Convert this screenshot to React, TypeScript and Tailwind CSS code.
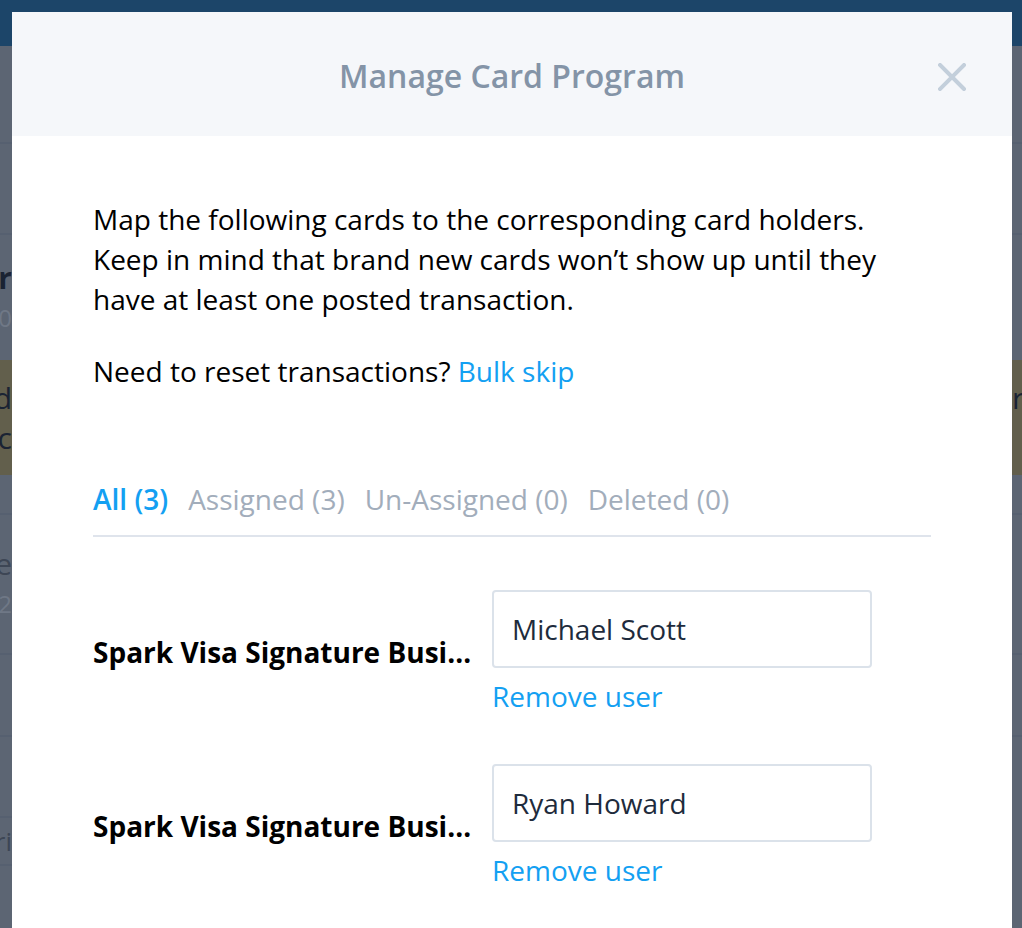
import React from 'react';

const cards = [
  { name: 'Spark Visa Signature Business Card', holder: 'Michael Scott' },
  { name: 'Spark Visa Signature Business Card', holder: 'Ryan Howard' },
];

const tabs = [
  { label: 'All (3)', active: true },
  { label: 'Assigned (3)', active: false },
  { label: 'Un-Assigned (0)', active: false },
  { label: 'Deleted (0)', active: false },
];

function CloseIcon() {
  return (
    <svg width="28" height="28" viewBox="0 0 28 28" fill="none">
      <path d="M2 2L26 26M26 2L2 26" stroke="#c3cfdb" strokeWidth="4" strokeLinecap="square" />
    </svg>
  );
}

export default function App() {
  return (
    <div className="relative w-full h-[928px] overflow-hidden bg-[#5c6573] font-['Open_Sans',sans-serif]">
      {/* Dimmed page behind the modal */}
      <div className="h-[46px] bg-[#1c4569]" />
      <div className="h-[98px] border-b-2 border-[#566070]" />
      <div className="h-[91px] border-b-2 border-[#566070]" />
      <div className="h-[125px] flex flex-col justify-center gap-[10px] text-[30px] leading-[30px]">
        <div className="w-3 flex justify-end overflow-hidden font-bold text-[#1a2333] whitespace-nowrap">Four</div>
        <div className="w-3 flex justify-end overflow-hidden text-[#6f7886] text-[24px] whitespace-nowrap">2020</div>
      </div>
      <div className="h-[115px] bg-[#625f4c] flex flex-col justify-center gap-[8px] text-[30px] leading-[32px] text-[#1a2333]">
        <div className="flex justify-between whitespace-nowrap">
          <div className="w-3 flex justify-end overflow-hidden">Need</div>
          <div className="w-[10px] overflow-hidden">rc</div>
        </div>
        <div className="w-3 flex justify-end overflow-hidden whitespace-nowrap">r c</div>
      </div>
      <div className="h-[40px] border-b-2 border-[#566070]" />
      <div className="h-[140px] border-b-2 border-[#566070] flex flex-col justify-center gap-[10px] text-[30px] leading-[30px]">
        <div className="w-3 flex justify-end overflow-hidden text-[#3d4655] whitespace-nowrap">Due</div>
        <div className="w-3 flex justify-end overflow-hidden text-[#6f7886] text-[24px] whitespace-nowrap">12</div>
      </div>
      <div className="h-[82px] border-b-2 border-[#566070]" />
      <div className="h-[81px] border-b-2 border-[#566070] w-3" />
      <div className="h-[48px] border-b-2 border-[#566070] w-3 flex items-center justify-end overflow-hidden text-[26px] text-[#3d4655] whitespace-nowrap">
        Pri
      </div>

      {/* Modal */}
      <div className="absolute top-3 left-3 w-[1000px] h-[940px] bg-white">
        <div className="relative h-[124px] bg-[#f5f7fa] flex items-center justify-center pt-[3px]">
          <h1 className="text-[32px] font-semibold text-[#8494a7]">Manage Card Program</h1>
          <button className="absolute right-[46px] top-[51px]">
            <CloseIcon />
          </button>
        </div>

        <div className="px-[81px] pt-[63px]">
          <p className="text-[28px] leading-[40px] text-black">
            Map the following cards to the corresponding card holders.
            <br />
            Keep in mind that brand new cards won’t show up until they have at least one posted transaction.
          </p>
          <p className="mt-[32px] text-[28px] leading-[40px] text-black">
            Need to reset transactions? <span className="text-[#13a0f2]">Bulk skip</span>
          </p>

          <div className="mt-[90px] flex gap-[20px] pb-[18px] border-b-2 border-[#dfe4ec] text-[28px] leading-[36px]">
            {tabs.map((t) => (
              <span key={t.label} className={t.active ? 'font-semibold text-[#13a0f2]' : 'text-[#a2adbb]'}>
                {t.label}
              </span>
            ))}
          </div>

          <div className="mt-[53px] flex flex-col gap-[50px]">
            {cards.map((c) => (
              <div key={c.holder} className="flex items-center gap-[19px]">
                <div className="w-[380px] truncate text-[28px] leading-[40px] font-bold text-black">{c.name}</div>
                <div className="flex flex-col">
                  <div className="w-[380px] h-[78px] border-2 border-[#dbe2ea] rounded-[4px] flex items-center pl-[18px] text-[28px] leading-[40px] text-[#1e2b3c]">
                    {c.holder}
                  </div>
                  <span className="mt-[10px] text-[28px] leading-[36px] text-[#13a0f2]">Remove user</span>
                </div>
              </div>
            ))}
          </div>
        </div>
      </div>
    </div>
  );
}
